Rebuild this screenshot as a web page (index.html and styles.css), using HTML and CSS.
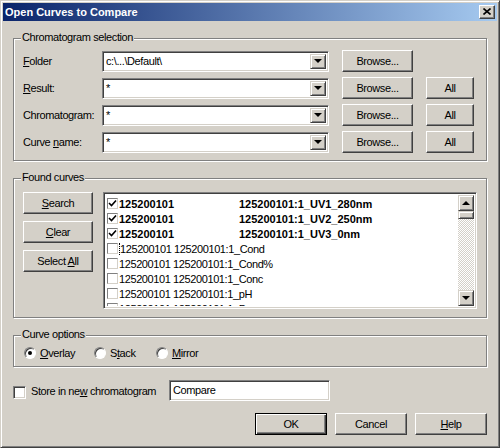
FILE: index.html
```html
<!DOCTYPE html>
<html lang="en">

<head>
    <meta charset="UTF-8">
    <title>Open Curves to Compare</title>
    <link rel="stylesheet" href="styles.css">
</head>

<body>
    <div class="window">
        <!-- Title bar -->
        <div class="titlebar">
            <span class="title">Open Curves to Compare</span>
            <button class="close-btn">
                <svg width="8" height="7" viewBox="0 0 8 7">
                    <path d="M0.5 0.5 L7.5 6.5 M7.5 0.5 L0.5 6.5" stroke="#000" stroke-width="1.6" fill="none"/>
                </svg>
            </button>
        </div>

        <div class="dialog-body">
            <!-- Chromatogram selection -->
            <div class="group selection">
                <span class="group-title">Chromatogram selection</span>
                <div class="sel-row">
                    <span class="sel-label"><u>F</u>older</span>
                    <div class="combo"><span class="combo-text">c:\...\Default\</span><span class="combo-btn"><i class="tri"></i></span></div>
                    <button class="btn browse">Browse...</button>
                    <span class="all-spacer"></span>
                </div>
                <div class="sel-row">
                    <span class="sel-label"><u>R</u>esult:</span>
                    <div class="combo"><span class="combo-text">*</span><span class="combo-btn"><i class="tri"></i></span></div>
                    <button class="btn browse">Browse...</button>
                    <button class="btn all">All</button>
                </div>
                <div class="sel-row">
                    <span class="sel-label">Chromatogram:</span>
                    <div class="combo"><span class="combo-text">*</span><span class="combo-btn"><i class="tri"></i></span></div>
                    <button class="btn browse">Browse...</button>
                    <button class="btn all">All</button>
                </div>
                <div class="sel-row">
                    <span class="sel-label">Curve <u>n</u>ame:</span>
                    <div class="combo"><span class="combo-text">*</span><span class="combo-btn"><i class="tri"></i></span></div>
                    <button class="btn browse">Browse...</button>
                    <button class="btn all">All</button>
                </div>
            </div>

            <!-- Found curves -->
            <div class="group found">
                <span class="group-title">Found curves</span>
                <div class="found-buttons">
                    <button class="btn side"><u>S</u>earch</button>
                    <button class="btn side"><u>C</u>lear</button>
                    <button class="btn side">Select <u>A</u>ll</button>
                </div>
                <div class="curve-list">
                    <div class="curve-items">
                        <div class="curve bold"><span class="chk checked"></span><span class="col1">125200101</span><span>125200101:1_UV1_280nm</span></div>
                        <div class="curve bold"><span class="chk checked"></span><span class="col1">125200101</span><span>125200101:1_UV2_250nm</span></div>
                        <div class="curve bold"><span class="chk checked"></span><span class="col1">125200101</span><span>125200101:1_UV3_0nm</span></div>
                        <div class="curve"><span class="chk"></span><span class="focus">125200101 125200101:1_Cond</span></div>
                        <div class="curve"><span class="chk"></span><span>125200101 125200101:1_Cond%</span></div>
                        <div class="curve"><span class="chk"></span><span>125200101 125200101:1_Conc</span></div>
                        <div class="curve"><span class="chk"></span><span>125200101 125200101:1_pH</span></div>
                        <div class="curve"><span class="chk"></span><span>125200101 125200101:1_Pressure</span></div>
                    </div>
                    <div class="scrollbar">
                        <span class="sb-btn"><i class="tri up"></i></span>
                        <span class="sb-thumb"></span>
                        <span class="sb-track"></span>
                        <span class="sb-btn"><i class="tri"></i></span>
                    </div>
                </div>
            </div>

            <!-- Curve options -->
            <div class="group options">
                <span class="group-title">Curve options</span>
                <label class="radio-item"><span class="radio on"></span><u>O</u>verlay</label>
                <label class="radio-item"><span class="radio"></span>S<u>t</u>ack</label>
                <label class="radio-item"><span class="radio"></span><u>M</u>irror</label>
            </div>

            <!-- Store row -->
            <div class="store-row">
                <span class="check-box"></span>
                <span class="store-label">Store in ne<u>w</u> chromatogram</span>
                <div class="text-field">Compare</div>
            </div>

            <!-- Dialog buttons -->
            <div class="dialog-buttons">
                <button class="btn dlg default">OK</button>
                <button class="btn dlg">Cancel</button>
                <button class="btn dlg"><u>H</u>elp</button>
            </div>
        </div>
    </div>
</body>

</html>
```

FILE: styles.css
```css
* {
    box-sizing: border-box;
    margin: 0;
    padding: 0;
}

body {
    font-family: "Liberation Sans", Arial, sans-serif;
    font-size: 11px;
    letter-spacing: -0.4px;
    color: #000;
    background-color: #d4d0c8;
}

u {
    text-decoration: underline;
    text-underline-offset: 1px;
}

.window {
    width: 500px;
    height: 448px;
    background-color: #d4d0c8;
    border: 1px solid;
    border-color: #d4d0c8 #404040 #404040 #d4d0c8;
    box-shadow: inset 1px 1px 0 #fff, inset -1px -1px 0 #808080;
    padding: 2px;
}

/* Title bar */
.titlebar {
    height: 18px;
    background: linear-gradient(to right, #0a246a, #a6caf0);
    display: flex;
    align-items: center;
    justify-content: space-between;
    padding: 0 2px 0 2px;
}

.title {
    color: #fff;
    font-weight: bold;
    letter-spacing: 0;
}

.close-btn {
    width: 16px;
    height: 14px;
    background-color: #d4d0c8;
    border: 1px solid;
    border-color: #fff #404040 #404040 #fff;
    box-shadow: inset -1px -1px 0 #808080;
    display: flex;
    align-items: center;
    justify-content: center;
    padding: 0 1px 1px 0;
}

.close-btn svg {
    display: block;
}

.dialog-body {
    padding: 17px 10px 0 10px;
}

/* Group boxes */
.group {
    position: relative;
    border: 1px solid #808080;
    box-shadow: inset 1px 1px 0 #fff, 1px 1px 0 #fff;
}

.group-title {
    position: absolute;
    top: -8px;
    left: 7px;
    line-height: 13px;
    padding: 0 1px;
    background-color: #d4d0c8;
}

/* Buttons */
.btn {
    font-family: inherit;
    font-size: 11px;
    letter-spacing: -0.4px;
    color: #000;
    height: 22px;
    background-color: #d4d0c8;
    border: 1px solid;
    border-color: #fff #404040 #404040 #fff;
    box-shadow: inset -1px -1px 0 #808080;
    text-align: center;
}

.btn.default {
    border-color: #000;
    box-shadow: inset 1px 1px 0 #fff, inset -1px -1px 0 #404040, inset -2px -2px 0 #808080;
}

/* Chromatogram selection */
.selection {
    padding: 11px 12px 7px 9px;
    display: flex;
    flex-direction: column;
    gap: 5px;
}

.sel-row {
    display: flex;
    align-items: center;
    height: 22px;
}

.sel-label {
    width: 79px;
}

.combo {
    width: 227px;
    height: 21px;
    background-color: #fff;
    border: 1px solid;
    border-color: #808080 #fff #fff #808080;
    box-shadow: inset 1px 1px 0 #404040, inset -1px -1px 0 #d4d0c8;
    display: flex;
    padding: 2px 2px 2px 2px;
    margin-right: 13px;
}

.combo-text {
    flex: 1;
    padding-left: 1px;
    line-height: 14px;
}

.combo-btn {
    width: 16px;
    height: 15px;
    background-color: #d4d0c8;
    border: 1px solid;
    border-color: #d4d0c8 #404040 #404040 #d4d0c8;
    box-shadow: inset 1px 1px 0 #fff, inset -1px -1px 0 #808080;
    display: flex;
    align-items: center;
    justify-content: center;
}

.tri {
    display: block;
    width: 0;
    height: 0;
    border-left: 4px solid transparent;
    border-right: 4px solid transparent;
    border-top: 4px solid #000;
}

.tri.up {
    border-top: none;
    border-bottom: 4px solid #000;
}

.browse {
    width: 71px;
    margin-right: 13px;
}

.all,
.all-spacer {
    width: 48px;
}

/* Found curves */
.found {
    margin-top: 17px;
    padding: 13px 9px 8px 9px;
    display: flex;
}

.found-buttons {
    width: 70px;
    margin-right: 10px;
    display: flex;
    flex-direction: column;
    gap: 7px;
}

.side {
    width: 70px;
}

.curve-list {
    width: 374px;
    height: 117px;
    background-color: #fff;
    border: 1px solid;
    border-color: #808080 #fff #fff #808080;
    box-shadow: inset 1px 1px 0 #404040, inset -1px -1px 0 #d4d0c8;
    padding: 2px;
    display: flex;
}

.curve-items {
    flex: 1;
    overflow: hidden;
    padding-top: 1px;
}

.curve {
    display: flex;
    align-items: center;
    height: 15px;
    padding-left: 1px;
    white-space: nowrap;
}

.curve.bold {
    font-weight: bold;
    letter-spacing: 0;
}

.chk {
    width: 11px;
    height: 11px;
    border: 1px solid;
    border-color: #808080 #d4d0c8 #d4d0c8 #808080;
    background-color: #fff;
    margin-right: 1px;
    flex-shrink: 0;
}

.chk.checked {
    background: #fff url("data:image/svg+xml,%3Csvg xmlns='http://www.w3.org/2000/svg' width='9' height='9'%3E%3Cpath d='M1 4 L3.5 6.5 L8 1.5' stroke='%23000' stroke-width='1.6' fill='none'/%3E%3C/svg%3E") no-repeat center;
}

.col1 {
    width: 120px;
}

.focus {
    border-left: 1px dotted #000;
}

.scrollbar {
    width: 16px;
    display: flex;
    flex-direction: column;
}

.sb-btn,
.sb-thumb {
    background-color: #d4d0c8;
    border: 1px solid;
    border-color: #d4d0c8 #404040 #404040 #d4d0c8;
    box-shadow: inset 1px 1px 0 #fff, inset -1px -1px 0 #808080;
}

.sb-btn {
    height: 16px;
    display: flex;
    align-items: center;
    justify-content: center;
}

.sb-thumb {
    height: 8px;
}

.sb-track {
    flex: 1;
    background: repeating-conic-gradient(#fff 0 25%, #d4d0c8 0 50%) 0 0 / 2px 2px;
}

/* Curve options */
.options {
    margin-top: 17px;
    padding: 10px 10px 7px 10px;
    display: grid;
    grid-template-columns: 70px 62px auto;
    align-items: center;
}

.radio-item {
    display: flex;
    align-items: center;
    height: 13px;
}

.radio {
    width: 12px;
    height: 12px;
    border-radius: 50%;
    background-color: #fff;
    border: 1px solid;
    border-color: #808080 #fff #fff #808080;
    box-shadow: inset 1px 1px 0 #404040;
    margin-right: 4px;
    display: flex;
    align-items: center;
    justify-content: center;
}

.radio.on::after {
    content: "";
    width: 4px;
    height: 4px;
    border-radius: 50%;
    background-color: #000;
}

/* Store row */
.store-row {
    margin-top: 13px;
    height: 21px;
    display: flex;
    align-items: center;
}

.check-box {
    width: 13px;
    height: 13px;
    background-color: #fff;
    border: 1px solid;
    border-color: #808080 #fff #fff #808080;
    box-shadow: inset 1px 1px 0 #404040, inset -1px -1px 0 #d4d0c8;
    margin: 4px 5px 0 0;
}

.store-label {
    width: 138px;
}

.text-field {
    width: 161px;
    height: 21px;
    background-color: #fff;
    border: 1px solid;
    border-color: #808080 #fff #fff #808080;
    box-shadow: inset 1px 1px 0 #404040, inset -1px -1px 0 #d4d0c8;
    padding: 2px 3px;
    line-height: 14px;
}

/* Dialog buttons */
.dialog-buttons {
    margin-top: 12px;
    display: flex;
    justify-content: flex-end;
    gap: 8px;
}

.dlg {
    width: 72px;
}
```
